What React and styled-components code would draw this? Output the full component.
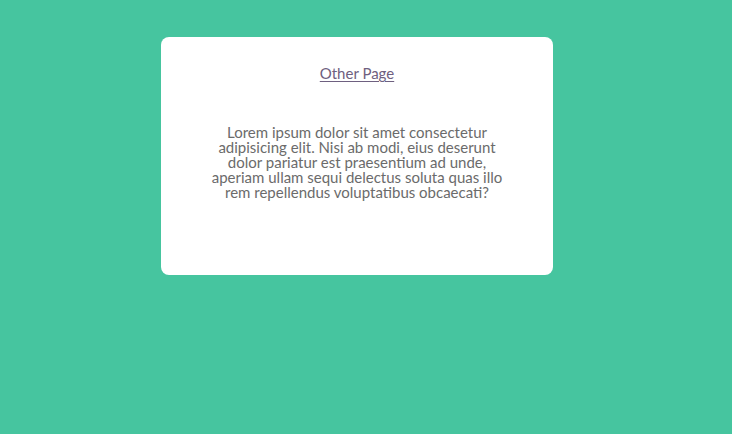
import styled, { createGlobalStyle } from "styled-components";

const Global = createGlobalStyle`
  html, body {
    margin: 0;
    padding: 0;
    background: #46c59f;
    font-family: "Lato", "Noto Sans", sans-serif;
  }
`;

const Page = styled.main`
  display: flex;
  justify-content: flex-start;
  padding: 37px 0 0 161px;
  min-height: 434px;
  box-sizing: border-box;
`;

const Card = styled.section`
  width: 392px;
  height: 238px;
  background: #fff;
  border-radius: 8px;
  box-sizing: border-box;
  padding: 27px 46px 0;
  display: flex;
  flex-direction: column;
  align-items: center;
`;

const Link = styled.a`
  color: #6e6080;
  font-size: 15px;
  text-decoration: underline;
  text-underline-offset: 2px;
  cursor: pointer;
`;

const Text = styled.p`
  margin: 43px 0 0;
  color: #6b6b6b;
  font-size: 15px;
  line-height: 15px;
  text-align: center;
`;

export default function App() {
  return (
    <>
      <Global />
      <Page>
        <Card>
          <Link>Other Page</Link>
          <Text>
            Lorem ipsum dolor sit amet consectetur adipisicing elit. Nisi ab
            modi, eius deserunt dolor pariatur est praesentium ad unde, aperiam
            ullam sequi delectus soluta quas illo rem repellendus voluptatibus
            obcaecati?
          </Text>
        </Card>
      </Page>
    </>
  );
}
